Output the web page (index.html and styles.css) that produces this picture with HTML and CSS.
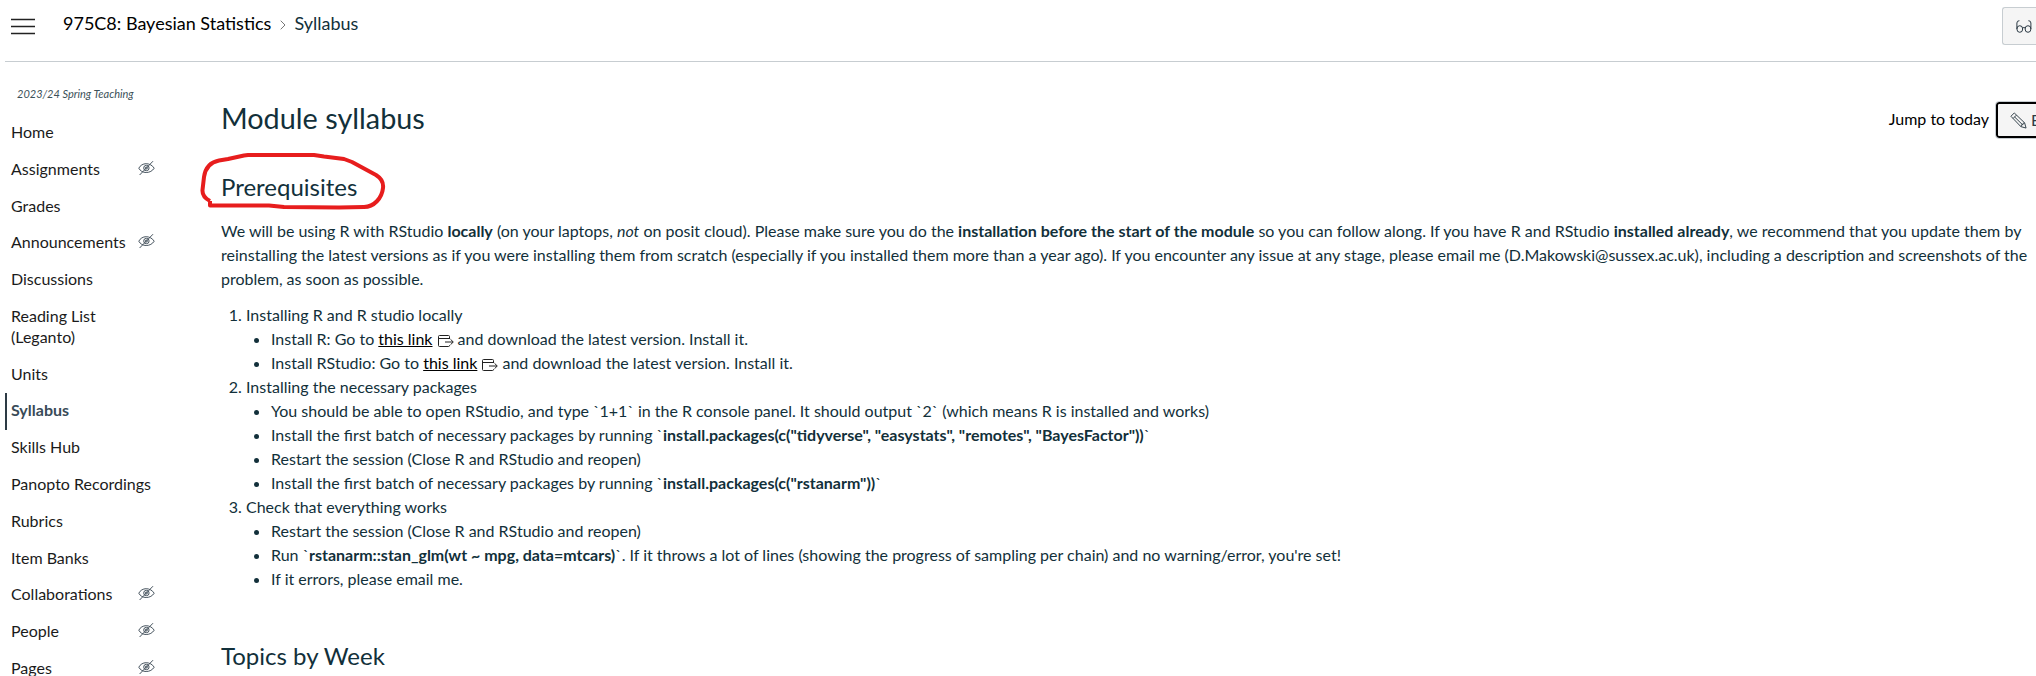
FILE: index.html
```
<!DOCTYPE html>
<html lang="en">
<head>
<meta charset="utf-8">
<title>Syllabus</title>
<link rel="stylesheet" href="styles.css">
</head>
<body>
<svg class="defs" width="0" height="0">
  <symbol id="eye-off" viewBox="0 0 17 16">
    <path d="M.8 8.200C2.200 5.400 5 3.700 8.200 3.700s6.300 1.700 8 4.500c-1.700 2.700-4.600 4.300-8 4.300S2.200 10.900.8 8.200z"/>
    <circle cx="8.400" cy="8" r="2.700"/>
    <circle cx="8.400" cy="8" r="1"/>
    <path d="M1.600 15 15 1.200"/>
  </symbol>
  <symbol id="external" viewBox="0 0 16 13">
    <path d="M11.500 4V1.500Q11.500.5 10.500.5H1.500Q.5.500.5 1.500v9q0 1 1 1h9q1 0 1-1V10M.5 3.500h11M7 7h8M12.500 4.300 15.300 7l-2.800 2.700"/>
  </symbol>
</svg>
<header class="topbar">
  <svg class="menu" width="24" height="18" viewBox="0 0 24 18"><path d="M0 1.500h24M0 8.500h24M0 15.500h24"/></svg>
  <nav class="crumbs">
    <a class="course">975C8: Bayesian Statistics</a>
    <svg width="6" height="10" viewBox="0 0 6 10"><path d="M.7.7 5 5 .7 9.300"/></svg>
    <span>Syllabus</span>
  </nav>
  <button class="student-view">
    <svg width="16" height="13" viewBox="0 0 16 13"><ellipse cx="3.800" cy="9" rx="2.900" ry="3.300"/><ellipse cx="12" cy="9" rx="2.900" ry="3.300"/><path d="M.9 9V3Q.9.700 3.400.700M14.900 9V3Q14.900.700 12.400.700M6.500 8q1.400-1 2.800 0"/></svg>
  </button>
</header>
<div class="page">
  <nav class="sidebar">
    <div class="term">2023/24 Spring Teaching</div>
    <a>Home</a>
    <a>Assignments<svg><use href="#eye-off"/></svg></a>
    <a>Grades</a>
    <a>Announcements<svg><use href="#eye-off"/></svg></a>
    <a>Discussions</a>
    <a>Reading List<br>(Leganto)</a>
    <a>Units</a>
    <a class="active">Syllabus</a>
    <a>Skills Hub</a>
    <a>Panopto Recordings</a>
    <a>Rubrics</a>
    <a>Item Banks</a>
    <a>Collaborations<svg><use href="#eye-off"/></svg></a>
    <a>People<svg><use href="#eye-off"/></svg></a>
    <a>Pages<svg><use href="#eye-off"/></svg></a>
  </nav>
  <main class="content">
    <div class="title-row">
      <h1>Module syllabus</h1>
      <div class="actions">
        <a>Jump to today</a>
        <button class="edit">
          <svg width="17" height="17" viewBox="0 0 18 18"><path d="M1 4.500 4.500 1 15.500 11.500 17 17 11.500 15.500zM3.300 6.800 6.800 3.300M11.500 15.500l.8-2 1.500-.2.200-1.500 1.500-.3M4.800 5.200 13 13.200"/></svg>
          <span>Edit</span>
        </button>
      </div>
    </div>
    <h2 class="circled">Prerequisites
      <svg class="scribble" width="190" height="60" viewBox="0 0 190 60"><path d="M11 50Q3 46 3.500 39L5 26Q7 12 20 9.500L29 8 45 4.500 49 4H115L125 5.500 145 8 153 11 177 24Q185 29 184 37C183 47 175 56 165 56L140 56.500 85 56 70 54.500H11V50"/></svg>
    </h2>
    <p>We will be using R with RStudio <b>locally</b> (on your laptops, <i>not</i> on posit cloud). Please make sure you do the <b>installation before the start of the module</b> so you can follow along. If you have R and RStudio <b>installed already</b>, we recommend that you update them by reinstalling the latest versions as if you were installing them from scratch (especially if you installed them more than a year ago). If you encounter any issue at any stage, please email me (D.Makowski@sussex.ac.uk), including a description and screenshots of the problem, as soon as possible.</p>
    <ol>
      <li>Installing R and R studio locally
        <ul>
          <li>Install R: Go to <a class="link">this link</a><svg class="ext"><use href="#external"/></svg> and download the latest version. Install it.</li>
          <li>Install RStudio: Go to <a class="link">this link</a><svg class="ext"><use href="#external"/></svg> and download the latest version. Install it.</li>
        </ul>
      </li>
      <li>Installing the necessary packages
        <ul>
          <li>You should be able to open RStudio, and type `1+1` in the R console panel. It should output `2` (which means R is installed and works)</li>
          <li>Install the first batch of necessary packages by running `<b>install.packages(c("tidyverse", "easystats", "remotes", "BayesFactor"))</b>`</li>
          <li>Restart the session (Close R and RStudio and reopen)</li>
          <li>Install the first batch of necessary packages by running `<b>install.packages(c("rstanarm"))</b>`</li>
        </ul>
      </li>
      <li>Check that everything works
        <ul>
          <li>Restart the session (Close R and RStudio and reopen)</li>
          <li>Run `<b>rstanarm::stan_glm(wt ~ mpg, data=mtcars)</b>`. If it throws a lot of lines (showing the progress of sampling per chain) and no warning/error, you're set!</li>
          <li>If it errors, please email me.</li>
        </ul>
      </li>
    </ol>
    <h2 class="topics">Topics by Week</h2>
  </main>
</div>
</body>
</html>
```
FILE: styles.css
```
* { box-sizing: border-box; }
html { overflow: hidden; }
body { margin: 0; height: 676px; overflow: hidden; background: #fff; color: #12303a; font: 16px/24px Lato, sans-serif; }
svg { fill: none; stroke: #2d3b45; flex: none; }
.defs { position: absolute; }
.topbar { display: flex; align-items: flex-start; height: 62px; margin-left: 5px; padding-left: 6px; border-bottom: 1px solid #c7cdd1; }
.menu { margin-top: 18px; stroke: #222; stroke-width: 1.6; }
.crumbs { display: flex; align-items: center; margin: 11px 0 0 28px; font-size: 18px; }
.crumbs .course { color: #000; }
.crumbs svg { margin: 4px 8px 0 9px; stroke: #777; }
button { font: inherit; color: #2d3b45; background: #f5f5f5; display: flex; align-items: center; }
.student-view { margin: 7px 0 0 auto; width: 34px; height: 38px; padding: 0 0 0 13px; border: 1px solid #c7cdd1; border-right: 0; border-radius: 3px 0 0 3px; }
.page { display: flex; }
.sidebar { width: 216px; padding-top: 21px; margin-left: 5px; flex: none; line-height: 20.8px; color: #1b1b1b; }
.term { height: 32px; padding: 1px 0 0 12px; font-size: 11px; font-style: italic; color: #3c5159; }
.sidebar a { display: flex; justify-content: space-between; width: 150px; padding: 7px 0 9px 6px; white-space: nowrap; }
.sidebar a svg { width: 17px; height: 16px; margin-top: 1px; stroke: #46535e; }
.sidebar a.active { padding-left: 4px; border-left: 2px solid #2d3b45; font-weight: bold; color: #394b58; }
.content { flex: 1; min-width: 0; }
.title-row { display: flex; justify-content: space-between; align-items: flex-start; padding-top: 38px; height: 94px; }
h1, h2 { margin: 0; font-weight: normal; }
h1 { font-size: 28.8px; line-height: 36px; }
.actions { display: flex; align-items: center; gap: 7px; margin-top: 2px; color: #000; }
.actions a { margin-top: -2px; }
.edit { width: 40px; height: 36px; padding: 0 0 0 12px; gap: 4px; border: 2px solid #000; border-right: 0; border-radius: 3px 0 0 3px; outline: 1px solid #c7cdd1; overflow: hidden; }
h2 { font-size: 24px; line-height: 36px; }
.circled { position: relative; margin-top: 13px; }
.scribble { position: absolute; left: -22px; top: -18px; stroke: #e71d1d; stroke-width: 4; stroke-linejoin: round; }
p { margin: 14px 0 12px; }
ol { margin: 0; padding-left: 25px; }
ul { margin: 0; padding-left: 25px; list-style: disc; }
.link { color: #000; text-decoration: underline; }
.ext { width: 16px; height: 13px; margin: 0 0 -3px 5px; stroke: #222; }
.topics { margin-top: 47px; }
```
